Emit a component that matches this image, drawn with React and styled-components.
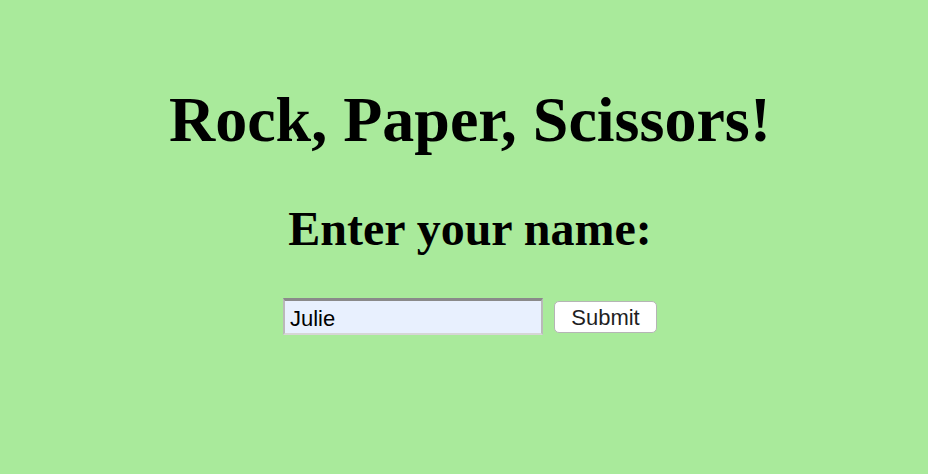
import React, { useState } from "react";
import styled, { createGlobalStyle } from "styled-components";

const GlobalStyle = createGlobalStyle`
  html, body {
    margin: 0;
    padding: 0;
    background: #a9ea9b;
  }
`;

const Page = styled.main`
  min-height: 474px;
  box-sizing: border-box;
  padding: 84px 0 0 12px;
  display: flex;
  flex-direction: column;
  align-items: center;
  text-align: center;
  font-family: "Liberation Serif", "Times New Roman", serif;
  color: #000;
`;

const Title = styled.h1`
  margin: 0;
  font-size: 64px;
  font-weight: 700;
  line-height: 71px;
`;

const Subtitle = styled.h2`
  margin: 47px 0 0;
  font-size: 48px;
  font-weight: 700;
  line-height: 53px;
`;

const NameForm = styled.form`
  margin-top: 43px;
  display: flex;
  align-items: center;
  gap: 11px;
`;

const NameInput = styled.input`
  box-sizing: border-box;
  width: 260px;
  height: 37px;
  padding: 3px 5px 0;
  border-style: solid;
  border-width: 3px 2px 2px 2px;
  border-color: #8a8a8a #b9b9b9 #d6d6d6 #b9b9b9;
  background: #e8f0fe;
  font-family: "Liberation Sans", Arial, sans-serif;
  font-size: 22px;
  color: #000;
  outline: none;
`;

const SubmitButton = styled.button`
  box-sizing: border-box;
  width: 103px;
  height: 32px;
  padding: 3px 0 0;
  background: #fff;
  border: 1px solid #b5b5b5;
  border-radius: 5px;
  font-family: "Liberation Sans", Arial, sans-serif;
  font-size: 22px;
  color: #1f1f1f;
  cursor: pointer;
`;

const App = () => {
  const [name, setName] = useState("Julie");

  return (
    <Page>
      <GlobalStyle />
      <Title>Rock, Paper, Scissors!</Title>
      <Subtitle>Enter your name:</Subtitle>
      <NameForm onSubmit={(e) => e.preventDefault()}>
        <NameInput
          type="text"
          value={name}
          onChange={(e) => setName(e.target.value)}
        />
        <SubmitButton type="submit">Submit</SubmitButton>
      </NameForm>
    </Page>
  );
};

export default App;
